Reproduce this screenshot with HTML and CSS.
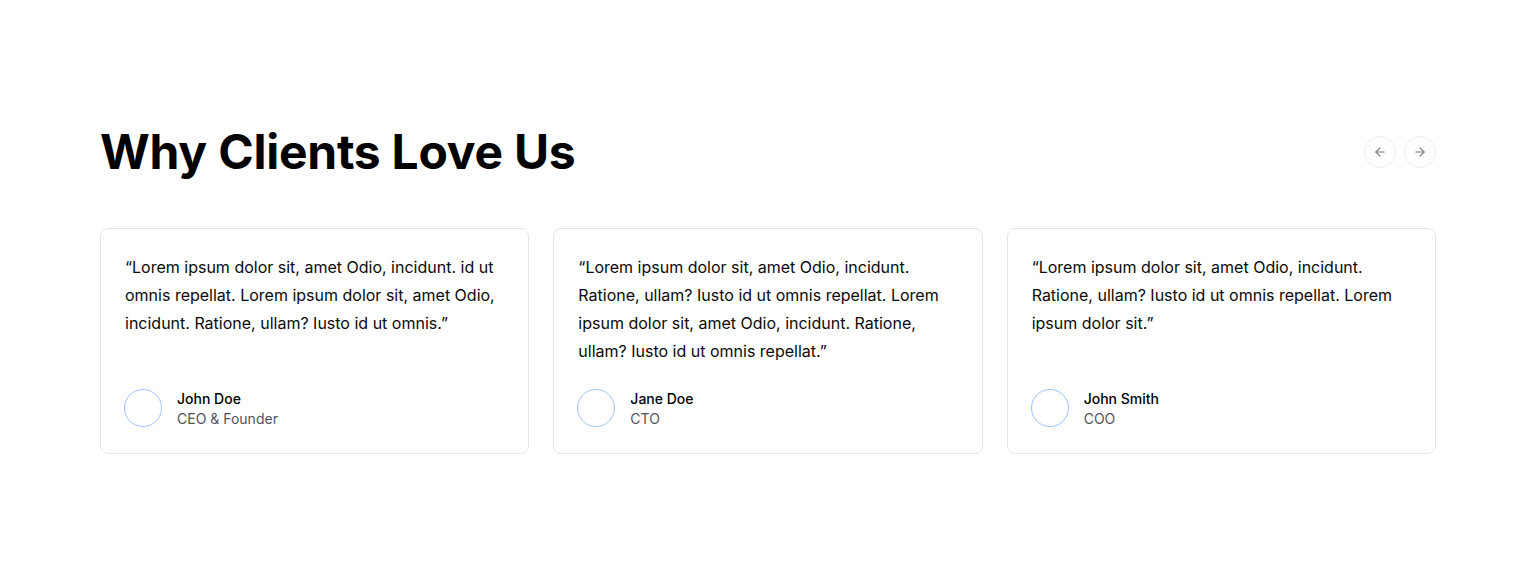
FILE: index.html
```html
<!DOCTYPE html>
<html lang="en">

<head>
    <meta charset="UTF-8">
    <meta name="viewport" content="width=device-width, initial-scale=1.0">
    <title>Testimonials</title>
    <link rel="stylesheet" href="styles.css">
</head>

<body>
    <section class="testimonials">
        <div class="head">
            <h1>Why Clients Love Us</h1>
            <div class="nav">
                <button class="nav-btn" aria-label="previous">
                    <svg width="14" height="14" viewBox="0 0 24 24" fill="none" stroke="currentColor" stroke-width="2" stroke-linecap="round" stroke-linejoin="round"><path d="M19 12H5"/><path d="M12 19l-7-7 7-7"/></svg>
                </button>
                <button class="nav-btn" aria-label="next">
                    <svg width="14" height="14" viewBox="0 0 24 24" fill="none" stroke="currentColor" stroke-width="2" stroke-linecap="round" stroke-linejoin="round"><path d="M5 12h14"/><path d="M12 5l7 7-7 7"/></svg>
                </button>
            </div>
        </div>

        <div class="cards">
            <div class="card">
                <p class="quote">“Lorem ipsum dolor sit, amet Odio, incidunt. id ut omnis repellat. Lorem ipsum dolor sit, amet Odio, incidunt. Ratione, ullam? Iusto id ut omnis.”</p>
                <div class="author">
                    <div class="avatar"></div>
                    <div>
                        <p class="name">John Doe</p>
                        <p class="role">CEO &amp; Founder</p>
                    </div>
                </div>
            </div>
            <div class="card">
                <p class="quote">“Lorem ipsum dolor sit, amet Odio, incidunt. Ratione, ullam? Iusto id ut omnis repellat. Lorem ipsum dolor sit, amet Odio, incidunt. Ratione, ullam? Iusto id ut omnis repellat.”</p>
                <div class="author">
                    <div class="avatar"></div>
                    <div>
                        <p class="name">Jane Doe</p>
                        <p class="role">CTO</p>
                    </div>
                </div>
            </div>
            <div class="card">
                <p class="quote">“Lorem ipsum dolor sit, amet Odio, incidunt. Ratione, ullam? Iusto id ut omnis repellat. Lorem ipsum dolor sit.”</p>
                <div class="author">
                    <div class="avatar"></div>
                    <div>
                        <p class="name">John Smith</p>
                        <p class="role">COO</p>
                    </div>
                </div>
            </div>
        </div>
    </section>
</body>

</html>
```

FILE: styles.css
```css
* {
    box-sizing: border-box;
}

body {
    margin: 0;
    font-family: Inter, "Noto Sans", sans-serif;
    background-color: white;
    color: #000;
}

p {
    margin: 0;
}

.testimonials {
    padding: 124px 100px;
}

.head {
    display: flex;
    justify-content: space-between;
    align-items: center;
    margin-bottom: 48px;
}

h1 {
    margin: 0;
    font-size: 48px;
    line-height: 56px;
    font-weight: 700;
    letter-spacing: -0.25px;
}

.nav {
    display: flex;
    gap: 8px;
}

.nav-btn {
    width: 32px;
    height: 32px;
    border-radius: 50%;
    border: 1px solid #ececec;
    background: white;
    color: #777;
    display: flex;
    align-items: center;
    justify-content: center;
    padding: 0;
}

.cards {
    display: grid;
    grid-template-columns: repeat(3, 1fr);
    gap: 24px;
}

.card {
    display: flex;
    flex-direction: column;
    justify-content: space-between;
    gap: 24px;
    padding: 24px;
    border: 1px solid #e5e5e5;
    border-radius: 8px;
}

.quote {
    font-size: 16px;
    line-height: 28px;
    color: #0a0a0a;
}

.author {
    display: flex;
    align-items: flex-start;
    gap: 15px;
}

.avatar {
    width: 38px;
    height: 38px;
    margin-left: -1px;
    border-radius: 50%;
    border: 1px solid #9fc3fb;
}

.name {
    font-size: 14px;
    line-height: 20px;
    font-weight: 500;
}

.role {
    font-size: 14px;
    line-height: 20px;
    color: #52525b;
}
```
